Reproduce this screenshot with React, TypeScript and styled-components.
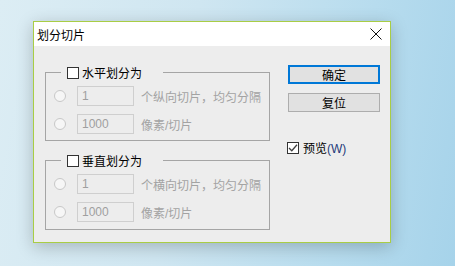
import React from "react";
import styled, { createGlobalStyle } from "styled-components";

const Global = createGlobalStyle`
  html, body { margin: 0; padding: 0; }
  body {
    width: 455px; height: 266px; overflow: hidden;
    font-family: "Liberation Sans", "Noto Sans CJK SC", sans-serif;
  }
`;

const Desktop = styled.div`
  width: 455px;
  height: 266px;
  box-sizing: border-box;
  padding: 21px 0 0 33px;
  background: linear-gradient(100deg, #dcedf4 0%, #cfe6f1 40%, #b7dcee 75%, #a6d3ea 100%);
`;

const Dialog = styled.div`
  width: 358px;
  height: 222px;
  box-sizing: border-box;
  border: 1px solid #a9cd45;
  background: #ededed;
  box-shadow: 0 4px 16px rgba(0, 0, 0, 0.22);
  display: flex;
  flex-direction: column;
`;

const TitleBar = styled.div`
  height: 24px;
  background: #ffffff;
  display: flex;
  align-items: center;
  padding-left: 3px;
  font-size: 12px;
  color: #000;
`;

const Close = styled.div`
  margin-left: auto;
  margin-right: 8px;
  width: 12px;
  height: 12px;
  display: flex;
`;

const Body = styled.div`
  flex: 1;
  display: flex;
  align-items: flex-start;
  padding-left: 11px;
`;

const LeftCol = styled.div`
  padding-top: 26px;
  display: flex;
  flex-direction: column;
  gap: 19px;
`;

const Group = styled.div<{ $h: number }>`
  position: relative;
  width: 225px;
  height: ${(p) => p.$h}px;
  box-sizing: border-box;
  border: 1px solid #a5a5a5;
  padding: 13px 0 0 8px;
  display: flex;
  flex-direction: column;
  gap: 8px;
`;

const Legend = styled.div`
  position: absolute;
  top: -7px;
  left: 15px;
  width: 102px;
  height: 13px;
  box-sizing: border-box;
  padding-left: 6px;
  background: #ededed;
  display: flex;
  align-items: center;
  gap: 3px;
  font-size: 12px;
  color: #000;
`;

const Box = styled.div`
  width: 12px;
  height: 12px;
  box-sizing: border-box;
  border: 1px solid #333333;
  background: #ffffff;
  flex: none;
  display: flex;
`;

const Row = styled.div`
  height: 20px;
  display: flex;
  align-items: center;
`;

const Radio = styled.div`
  width: 12px;
  height: 12px;
  box-sizing: border-box;
  border-radius: 50%;
  border: 1px solid #c8c8c8;
  background: #f6f6f6;
  flex: none;
`;

const Field = styled.div`
  width: 57px;
  height: 20px;
  box-sizing: border-box;
  margin-left: 11px;
  border: 1px solid #cfcfcf;
  background: #ededed;
  padding-left: 4px;
  display: flex;
  align-items: center;
  font-size: 12px;
  color: #9f9f9f;
`;

const Caption = styled.span`
  margin-left: 7px;
  font-size: 12px;
  color: #a3a3a3;
  white-space: nowrap;
`;

const RightCol = styled.div`
  margin-left: 18px;
  padding-top: 19px;
  display: flex;
  flex-direction: column;
`;

const Button = styled.div<{ $primary?: boolean }>`
  width: 92px;
  height: 19px;
  box-sizing: border-box;
  border: ${(p) => (p.$primary ? "2px solid #0078d7" : "1px solid #adadad")};
  background: #e1e1e1;
  display: flex;
  align-items: center;
  justify-content: center;
  font-size: 12px;
  color: #000;
  & + & { margin-top: 9px; }
`;

const Preview = styled.div`
  margin-top: 27px;
  margin-left: -1px;
  display: flex;
  align-items: center;
  gap: 4px;
  font-size: 12px;
  color: #000;
`;

const Accel = styled.span`
  color: #1f3a7a;
`;

const CheckBox = ({ checked }: { checked?: boolean }) => (
  <Box>
    {checked && (
      <svg width="10" height="10" viewBox="0 0 10 10">
        <polyline points="1,5 3.8,7.8 9,1.8" fill="none" stroke="#404040" strokeWidth="1.3" />
      </svg>
    )}
  </Box>
);

const rows = (text: string) => (
  <>
    <Row>
      <Radio />
      <Field>1</Field>
      <Caption>{text}</Caption>
    </Row>
    <Row>
      <Radio />
      <Field>1000</Field>
      <Caption>像素/切片</Caption>
    </Row>
  </>
);

export default function App() {
  return (
    <>
      <Global />
      <Desktop>
        <Dialog>
          <TitleBar>
            划分切片
            <Close>
              <svg width="12" height="12" viewBox="0 0 12 12">
                <path d="M0.5 0.5 L11.5 11.5 M11.5 0.5 L0.5 11.5" stroke="#111" strokeWidth="1" />
              </svg>
            </Close>
          </TitleBar>
          <Body>
            <LeftCol>
              <Group $h={69}>
                <Legend>
                  <CheckBox />
                  水平划分为
                </Legend>
                {rows("个纵向切片，均匀分隔")}
              </Group>
              <Group $h={70}>
                <Legend>
                  <CheckBox />
                  垂直划分为
                </Legend>
                {rows("个横向切片，均匀分隔")}
              </Group>
            </LeftCol>
            <RightCol>
              <Button $primary>确定</Button>
              <Button>复位</Button>
              <Preview>
                <CheckBox checked />
                <span>
                  预览<Accel>(W)</Accel>
                </span>
              </Preview>
            </RightCol>
          </Body>
        </Dialog>
      </Desktop>
    </>
  );
}
